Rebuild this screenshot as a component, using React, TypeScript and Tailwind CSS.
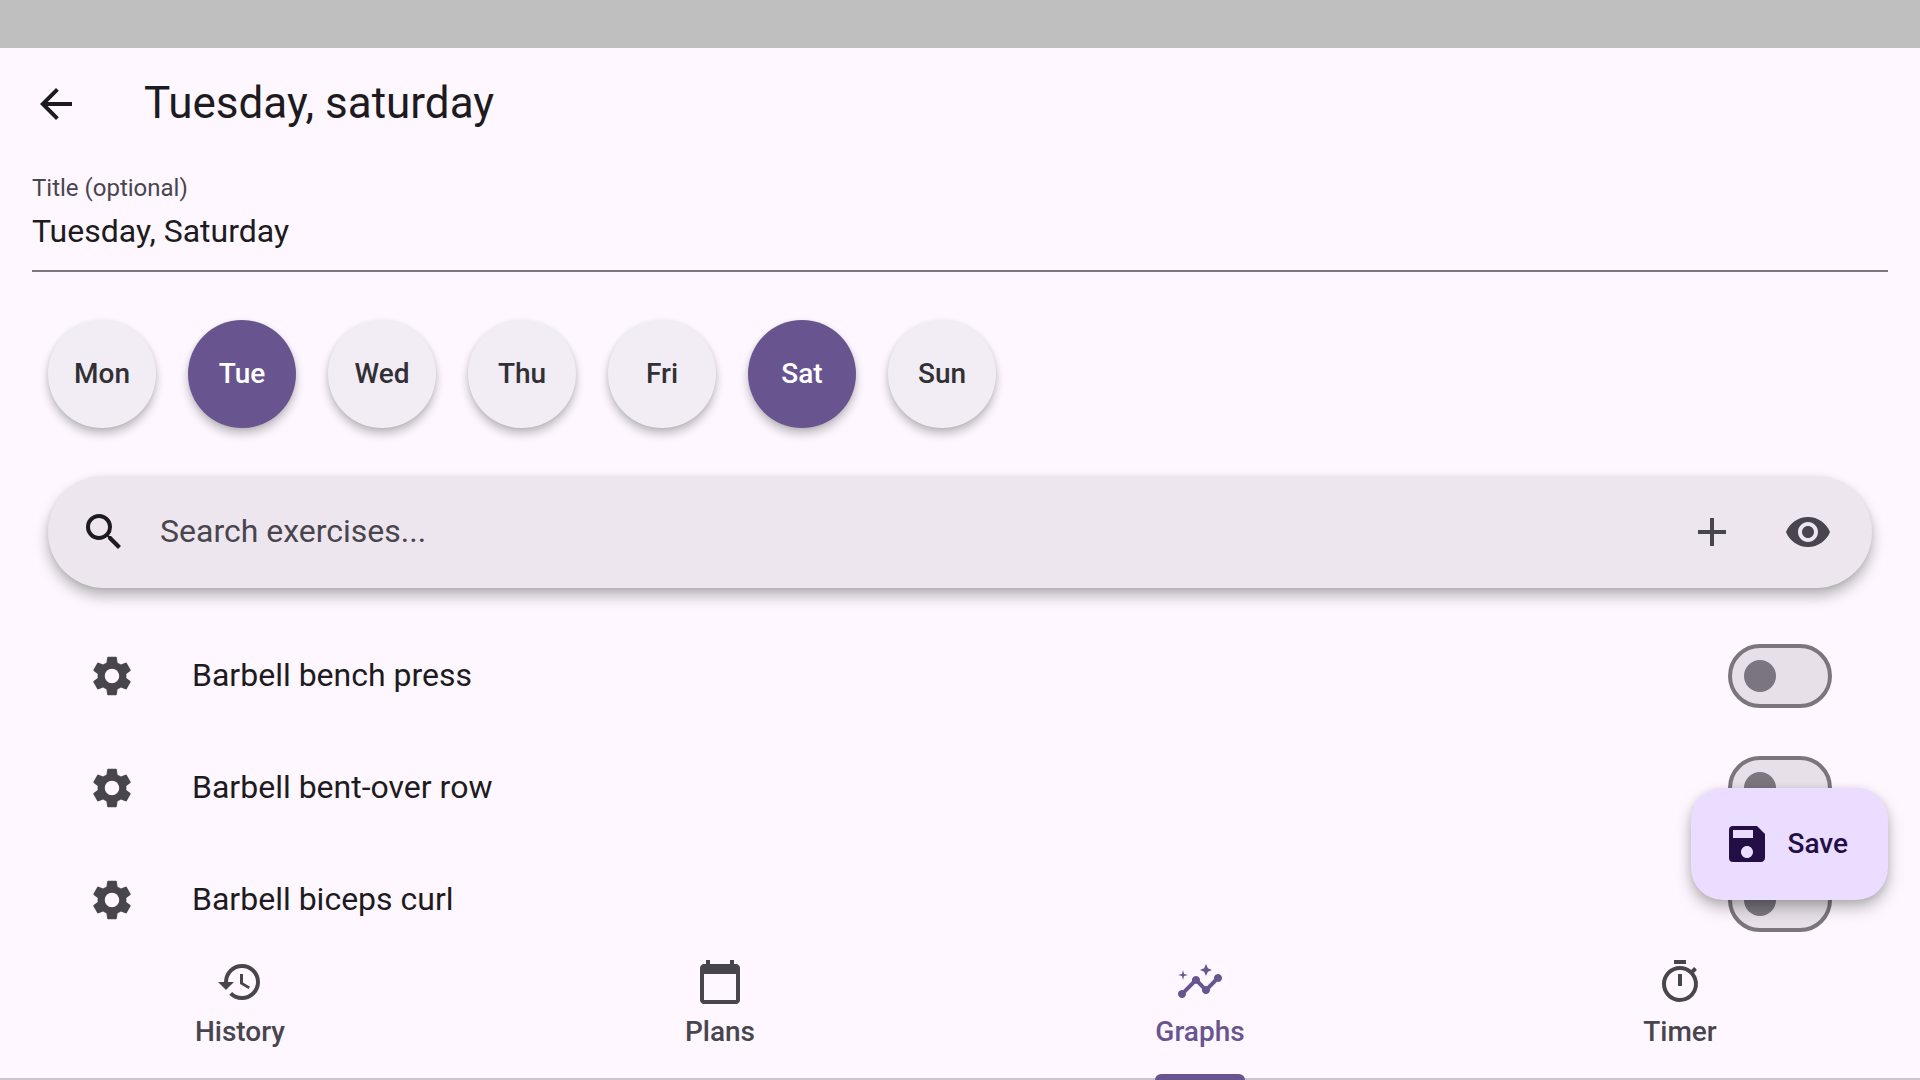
import React, { useState } from "react";
import {
  MdAdd,
  MdArrowBack,
  MdCalendarToday,
  MdHistory,
  MdInsights,
  MdOutlineTimer,
  MdSave,
  MdSearch,
  MdSettings,
  MdVisibility,
} from "react-icons/md";

const DAYS = ["Mon", "Tue", "Wed", "Thu", "Fri", "Sat", "Sun"];

const EXERCISES = ["Barbell bench press", "Barbell bent-over row", "Barbell biceps curl"];

const TABS = [
  { label: "History", Icon: MdHistory },
  { label: "Plans", Icon: MdCalendarToday },
  { label: "Graphs", Icon: MdInsights },
  { label: "Timer", Icon: MdOutlineTimer },
];

function DayButton({ label, active, onClick }: { label: string; active: boolean; onClick: () => void }) {
  return (
    <button
      type="button"
      aria-pressed={active}
      onClick={onClick}
      className={`size-27 rounded-full text-[28px] font-medium shadow-[0_6px_10px_rgba(0,0,0,0.24),0_1px_4px_rgba(0,0,0,0.08)] ${
        active ? "bg-[#68548e] text-white" : "bg-[#f2edf4] text-[#323035]"
      }`}
    >
      {label}
    </button>
  );
}

function ExerciseRow({ name }: { name: string }) {
  const id = name.toLowerCase().replace(/ /g, "-");
  return (
    <li className="flex h-28 items-center gap-8 pr-22 pl-16">
      <button type="button" aria-label={`${name} settings`} className="grid size-24 place-items-center text-[#49454e]">
        <MdSettings className="size-12" />
      </button>
      <label htmlFor={id} className="flex-1 pb-0.5 text-[32px]">
        {name}
      </label>
      <input
        id={id}
        type="checkbox"
        role="switch"
        className="flex h-16 w-26 appearance-none items-center rounded-full border-4 border-[#7b757f] bg-[#e7e0e8] px-3 before:size-8 before:rounded-full before:bg-[#7b757f] checked:justify-end checked:border-[#68548e] checked:bg-[#68548e] checked:before:bg-white"
      />
    </li>
  );
}

export default function App() {
  const [days, setDays] = useState(["Tue", "Sat"]);
  const [tab, setTab] = useState("Graphs");

  const toggleDay = (day: string) =>
    setDays((current) => (current.includes(day) ? current.filter((d) => d !== day) : [...current, day]));

  return (
    <div className="flex h-screen flex-col bg-[#fef7ff] font-[Roboto,sans-serif] text-[#1d1b20]">
      <div className="h-12 shrink-0 bg-[#bfbfbf]" />

      <header className="flex h-28 shrink-0 items-center gap-10 px-2">
        <button type="button" aria-label="Back" className="grid size-24 place-items-center">
          <MdArrowBack className="size-12" />
        </button>
        <h1 className="pb-0.5 text-[44px] leading-14">Tuesday, saturday</h1>
      </header>

      <main className="relative flex min-h-0 flex-1 flex-col overflow-hidden">
        <div className="mx-8 flex h-28 shrink-0 flex-col border-b-2 border-[#7b757f] pt-3">
          <label htmlFor="title" className="text-2xl leading-8 text-[#49454e]">
            Title (optional)
          </label>
          <input
            id="title"
            type="text"
            defaultValue="Tuesday, Saturday"
            className="h-14 w-full bg-transparent pb-0.5 text-[32px] outline-none"
          />
        </div>

        <div className="flex shrink-0 gap-8 px-12 py-12">
          {DAYS.map((day) => (
            <DayButton key={day} label={day} active={days.includes(day)} onClick={() => toggleDay(day)} />
          ))}
        </div>

        <div className="mx-12 flex h-28 shrink-0 items-center rounded-full bg-[#ede6ee] pr-4 pl-8 shadow-[0_8px_14px_rgba(0,0,0,0.28),0_1px_5px_rgba(0,0,0,0.08)]">
          <MdSearch className="size-12 shrink-0" />
          <input
            type="text"
            aria-label="Search exercises"
            placeholder="Search exercises..."
            className="ml-8 h-full min-w-0 flex-1 bg-transparent pb-0.5 text-[32px] outline-none placeholder:text-[#49454e]"
          />
          <button type="button" aria-label="Add exercise" className="grid size-24 place-items-center text-[#49454e]">
            <MdAdd className="size-12" />
          </button>
          <button type="button" aria-label="Toggle visibility" className="grid size-24 place-items-center text-[#49454e]">
            <MdVisibility className="size-12" />
          </button>
        </div>

        <ul className="mt-8 shrink-0">
          {EXERCISES.map((name) => (
            <ExerciseRow key={name} name={name} />
          ))}
        </ul>

        <button
          type="button"
          className="absolute right-8 bottom-9 flex h-28 items-center gap-4 rounded-4xl bg-[#ebddff] pr-10 pl-8 text-[28px] font-medium text-[#230f46] shadow-[0_8px_16px_rgba(0,0,0,0.26),0_2px_8px_rgba(0,0,0,0.1)]"
        >
          <MdSave className="size-12" />
          Save
        </button>
      </main>

      <nav className="flex h-36 shrink-0 border-b-2 border-[#cbc4cf]">
        {TABS.map(({ label, Icon }) => (
          <button
            key={label}
            type="button"
            aria-current={tab === label ? "page" : undefined}
            onClick={() => setTab(label)}
            className={`flex flex-1 flex-col items-center pt-5.5 ${tab === label ? "text-[#68548e]" : "text-[#49454e]"}`}
          >
            <Icon className="size-12 shrink-0" />
            <span className="relative flex-1 pt-1.5 text-[28px] leading-10 font-medium">
              {label}
              {tab === label && <span className="absolute inset-x-0 -bottom-0.5 h-1.5 rounded-t-md bg-[#68548e]" />}
            </span>
          </button>
        ))}
      </nav>
    </div>
  );
}
